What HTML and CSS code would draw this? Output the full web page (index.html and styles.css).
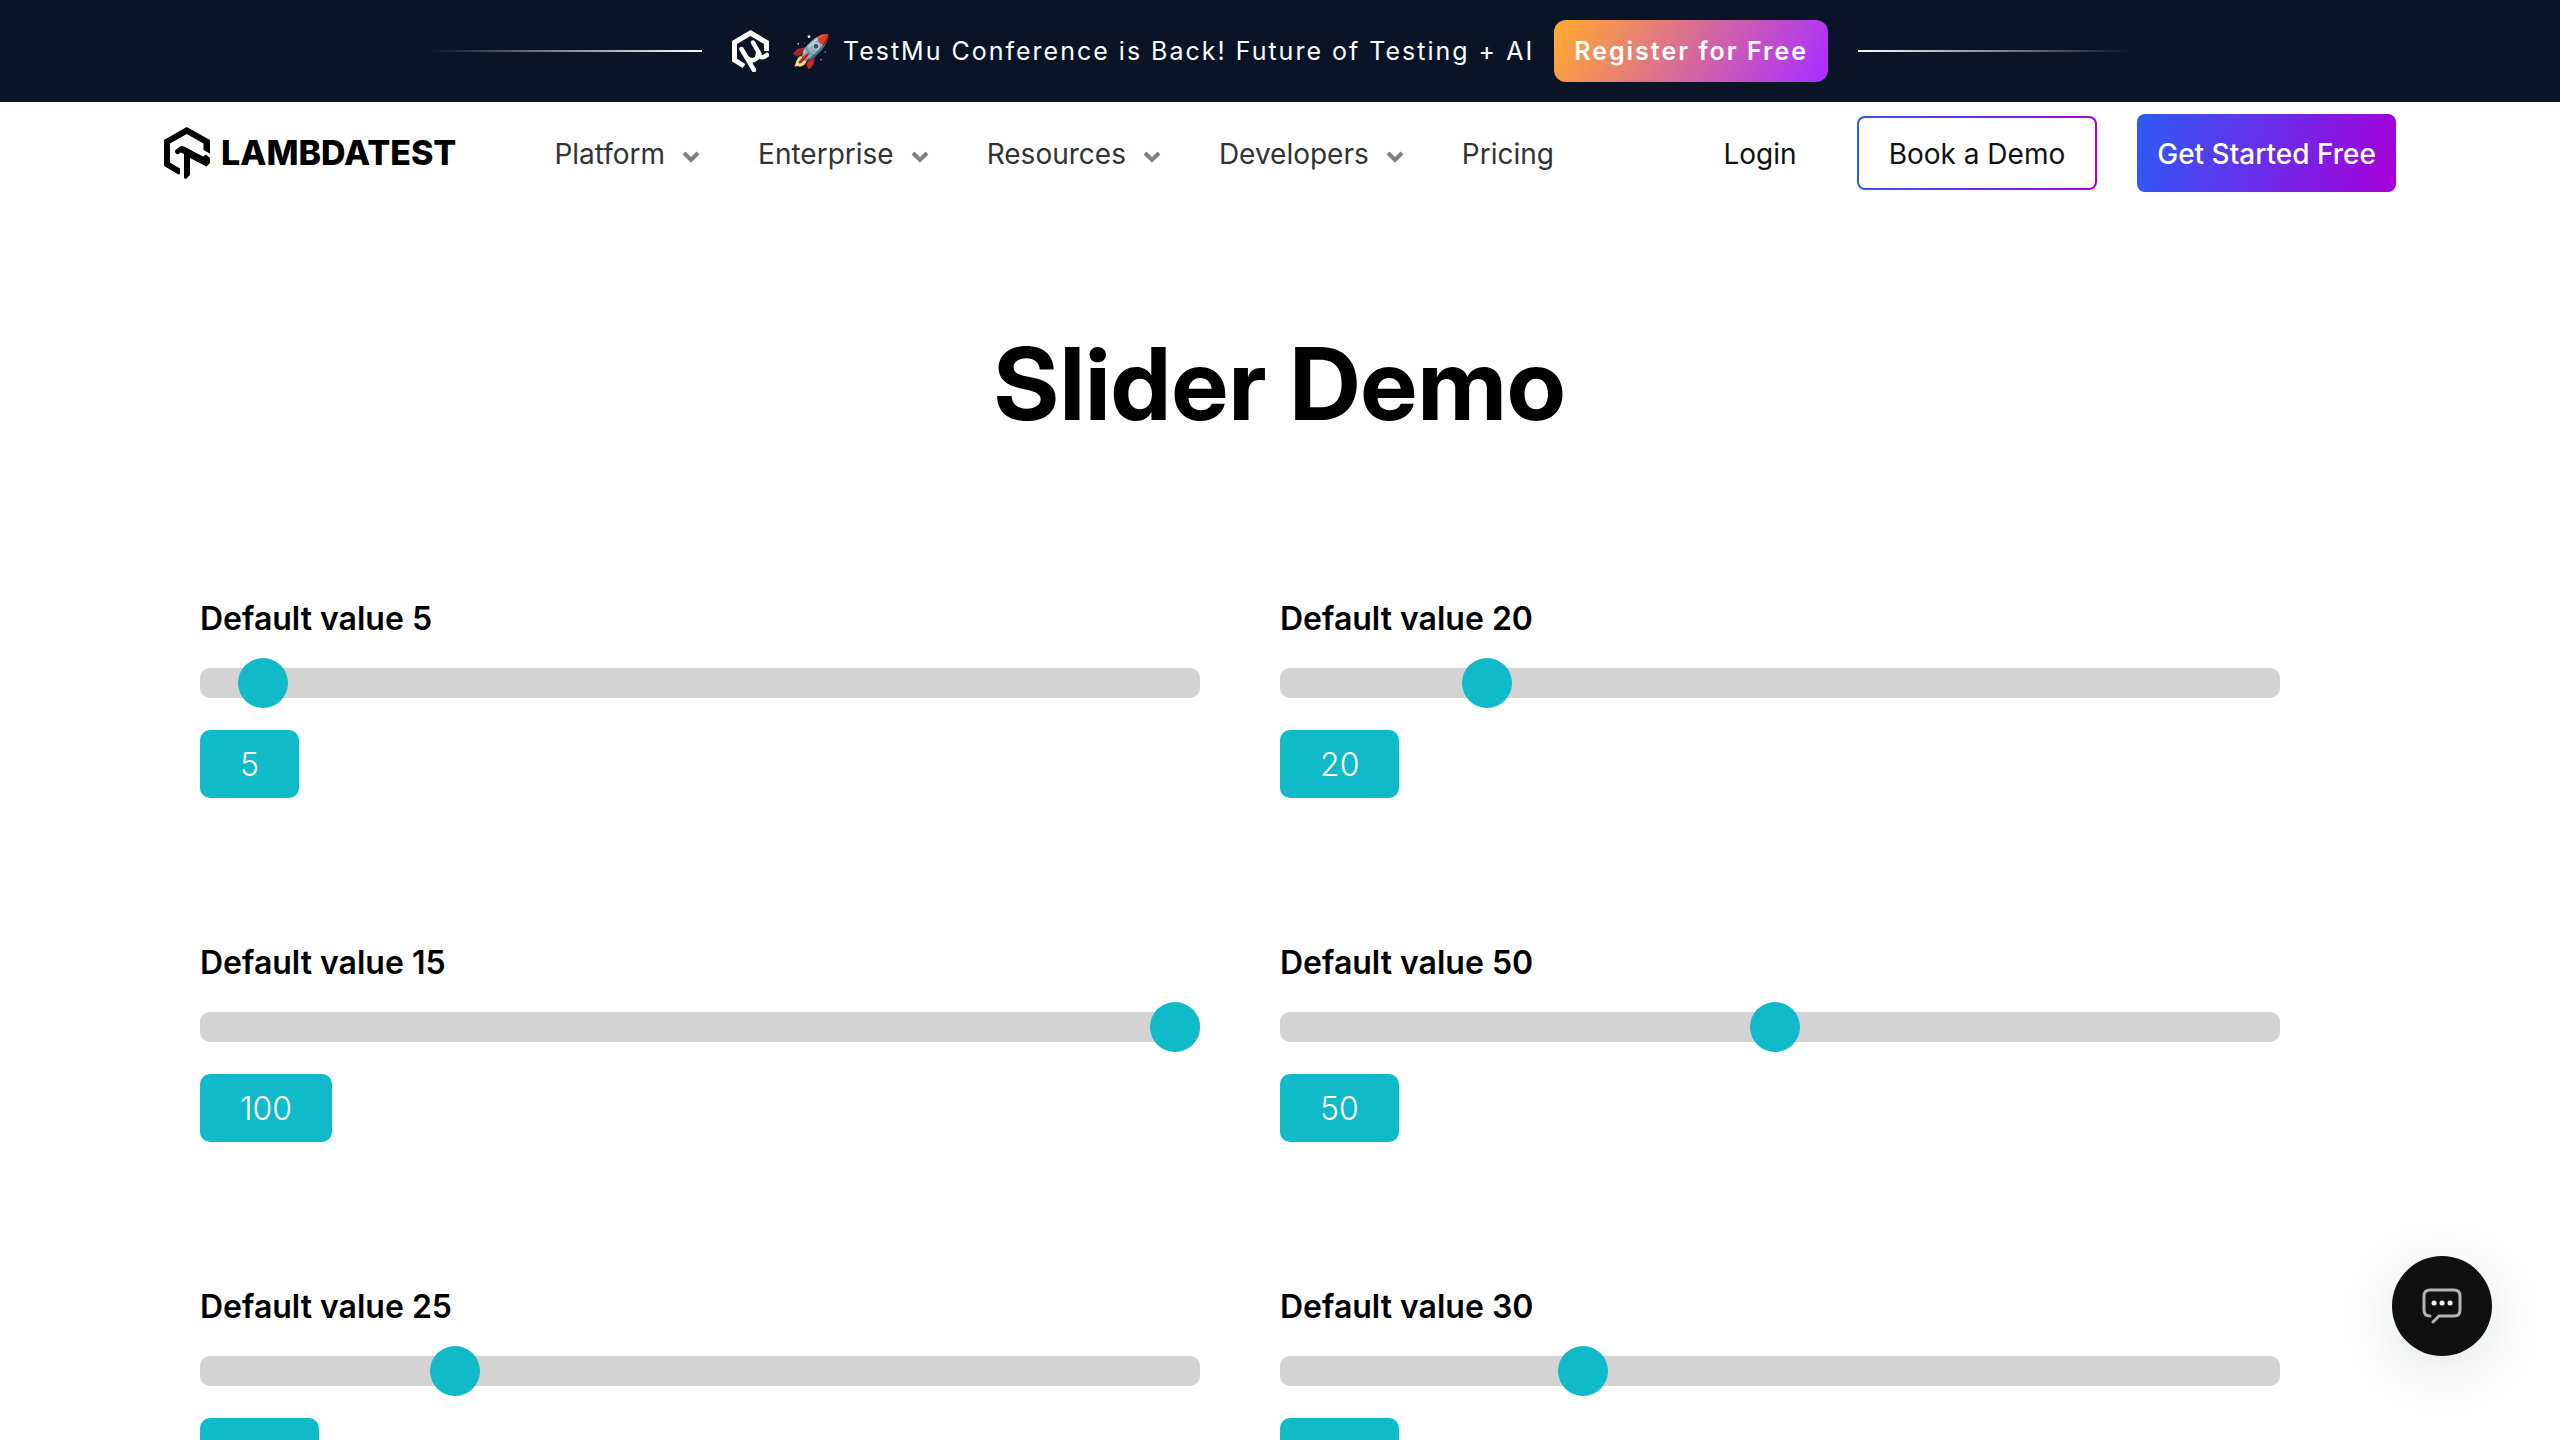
FILE: index.html
```html
<!DOCTYPE html>
<html lang="en">
<head>
<meta charset="utf-8">
<title>Slider Demo</title>
<link rel="stylesheet" href="styles.css">
</head>
<body>
<aside class="banner">
  <span class="rule rule-left"></span>
  <svg class="mu" viewBox="0 0 37 42" fill="none" stroke="#fff" stroke-width="5" aria-hidden="true">
    <path d="M12 36 2.500 30V12.500L18.500 3 34.500 12.500V21"/>
    <path d="M9.500 19 22 40M21 12.500 27.500 24M14 27Q20 33 25 28L26.500 22M26 24Q29 30 35 25" stroke-width="4.500" stroke-linecap="round"/>
  </svg>
  <p class="news"><span class="rocket">🚀</span> TestMu Conference is Back! Future of Testing + AI</p>
  <a class="register" href="#">Register for Free</a>
  <span class="rule rule-right"></span>
</aside>
<header class="header">
  <a class="logo" href="#">
    <svg class="logo-mark" viewBox="0 0 46 52" aria-hidden="true">
      <path d="M22.700 0 46 13V26.500L39.500 23V16.500L22.700 7 6 16.500V35.500L16 41.500V47L14.500 47.500 0 39V13Z"/>
      <path d="M11 23.500 16 19.500Q18 18.500 20 19.500L39 29.500 42 27.500 46 31V36L42.500 39.500 26 31V48L22 52 20 51V27L17 25.500 13.500 27.500Q10.500 26 11 23.500Z"/>
    </svg>
    <span class="wordmark">LAMBDATEST</span>
  </a>
  <nav class="nav">
    <button class="nav-item" type="button">Platform<svg class="chevron" viewBox="0 0 18 12"><path d="m2 2 7 7 7-7"/></svg></button>
    <button class="nav-item" type="button">Enterprise<svg class="chevron" viewBox="0 0 18 12"><path d="m2 2 7 7 7-7"/></svg></button>
    <button class="nav-item" type="button">Resources<svg class="chevron" viewBox="0 0 18 12"><path d="m2 2 7 7 7-7"/></svg></button>
    <button class="nav-item" type="button">Developers<svg class="chevron" viewBox="0 0 18 12"><path d="m2 2 7 7 7-7"/></svg></button>
    <a class="nav-item" href="#">Pricing</a>
  </nav>
  <div class="actions">
    <a class="login" href="#">Login</a>
    <button class="demo" type="button">Book a Demo</button>
    <a class="start" href="#">Get Started Free</a>
  </div>
</header>
<main>
  <h1 class="title">Slider Demo</h1>
  <section class="sliders">
    <div class="slider"><label for="s1">Default value 5</label><input id="s1" type="range" min="1" max="100" value="5"><output for="s1">5</output></div>
    <div class="slider"><label for="s2">Default value 20</label><input id="s2" type="range" min="1" max="100" value="20"><output for="s2">20</output></div>
    <div class="slider"><label for="s3">Default value 15</label><input id="s3" type="range" min="1" max="100" value="100"><output for="s3">100</output></div>
    <div class="slider"><label for="s4">Default value 50</label><input id="s4" type="range" min="1" max="100" value="50"><output for="s4">50</output></div>
    <div class="slider"><label for="s5">Default value 25</label><input id="s5" type="range" min="1" max="100" value="25"><output for="s5">25</output></div>
    <div class="slider"><label for="s6">Default value 30</label><input id="s6" type="range" min="1" max="100" value="30"><output for="s6">30</output></div>
  </section>
</main>
<button class="chat" type="button" aria-label="Open chat">
  <svg viewBox="0 0 40 36" fill="none" stroke="#b4b4b4" stroke-width="3" stroke-linecap="round" stroke-linejoin="round" aria-hidden="true">
    <path d="M8 28Q2 28 2 22V8Q2 2 8 2H32Q38 2 38 8V22Q38 28 32 28H17L11 34"/>
    <path d="M12 15h.1M20 15h.1M28 15h.1" stroke="#eee" stroke-width="5"/>
  </svg>
</button>
</body>
</html>
```

FILE: styles.css
```css
* { box-sizing: border-box; }
html { overflow: hidden; }
body {
  margin: 0;
  background: #fff;
  color: #000;
  font-family: Inter, "Liberation Sans", sans-serif;
}
a { color: inherit; text-decoration: none; }
button { border: 0; background: none; color: inherit; font: inherit; cursor: pointer; }

.banner {
  display: flex;
  align-items: center;
  justify-content: center;
  height: 102px;
  background: #091427;
  color: #fff;
  font-size: 25px;
  line-height: 38px;
  letter-spacing: 2px;
}
.rule { width: 274px; height: 2px; }
.rule-left { margin-right: 30px; background: linear-gradient(90deg, transparent, #fff); }
.rule-right { margin-left: 30px; background: linear-gradient(90deg, #fff, transparent); }
.mu { width: 37px; height: 42px; margin-right: 22px; }
.news { display: flex; gap: 12px; margin: 0; white-space: nowrap; }
.rocket { font-size: 32px; letter-spacing: 0; }
.register {
  margin-left: 20px;
  padding: 12px 20px;
  border-radius: 12px;
  background: linear-gradient(119deg, #ffa537 4%, #ad30fd 96%);
  font-weight: 600;
}

.header {
  display: flex;
  align-items: center;
  padding: 12px 164px;
  font-size: 28px;
  line-height: 42px;
}
.logo { display: flex; align-items: center; gap: 11px; }
.logo-mark { width: 46px; height: 52px; }
.wordmark { font-size: 34px; font-weight: 800; }
.nav { display: flex; gap: 58px; margin-left: 98px; padding-top: 2px; color: #333; }
.nav-item { display: flex; align-items: center; gap: 17px; padding: 0; }
.chevron {
  width: 18px;
  height: 12px;
  margin-top: 6px;
  fill: none;
  stroke: #808080;
  stroke-width: 4;
}
.actions { display: flex; align-items: center; margin-left: auto; color: #111; }
.demo {
  margin: 0 40px 0 60px;
  padding: 15px 30px 13px;
  border: 2px solid transparent;
  border-radius: 8px;
  background:
    linear-gradient(#fff, #fff) padding-box,
    linear-gradient(90deg, #2c5af6, #a800d8) border-box;
}
.login { padding-top: 2px; }
.start {
  padding: 19px 20px 17px;
  border-radius: 8px;
  background: linear-gradient(105deg, #2c5af6, #a800d8);
  color: #fff;
  font-weight: 500;
}

.title {
  margin: 120px 0 151px;
  font-family: "Inter Display", Inter, sans-serif;
  font-size: 100px;
  font-weight: 700;
  line-height: 120px;
  letter-spacing: 1px;
  text-align: center;
}
.sliders {
  display: grid;
  grid-template-columns: 1fr 1fr;
  gap: 141px 80px;
  padding: 0 280px 80px 200px;
}
.slider { display: flex; flex-direction: column; align-items: flex-start; }
.slider label { font-size: 32px; font-weight: 600; line-height: 48px; }
.slider input {
  width: 100%;
  height: 30px;
  margin: 25px 0 32px;
  border-radius: 10px;
  background: #d3d3d3;
  appearance: none;
}
.slider input::-webkit-slider-thumb {
  width: 50px;
  height: 50px;
  border-radius: 50%;
  background: #10bac8;
  appearance: none;
}
.slider output {
  padding: 11px 40px 9px;
  border-radius: 10px;
  background: #10bac8;
  color: #fff;
  font-size: 32px;
  font-weight: 300;
  line-height: 48px;
}

.chat {
  position: fixed;
  right: 68px;
  bottom: 84px;
  display: grid;
  place-items: center;
  width: 100px;
  height: 100px;
  padding: 0;
  border-radius: 50%;
  background: #101010;
  box-shadow: 0 12px 60px rgba(16, 24, 32, 0.12);
}
.chat svg { width: 40px; height: 36px; }
```
